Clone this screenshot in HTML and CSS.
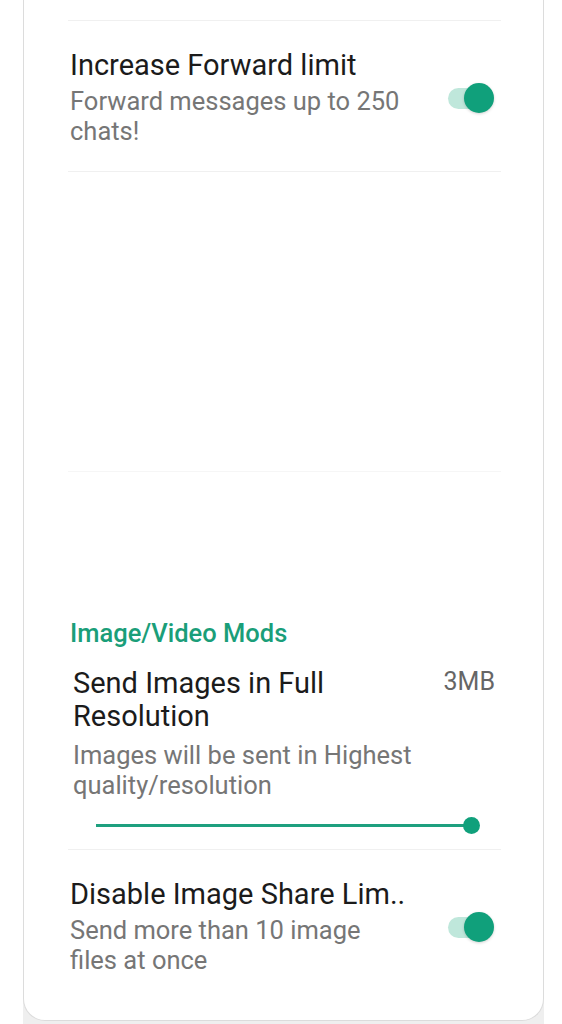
FILE: index.html
```html
<!DOCTYPE html>
<html lang="en">
<head>
    <meta charset="UTF-8">
    <meta name="viewport" content="width=device-width, initial-scale=1.0">
    <title>Mods Settings</title>
    <link rel="stylesheet" href="styles.css">
</head>
<body>

<div class="frame">
    <div class="card">
        <div class="list">
            <div class="pref-cut"></div>

            <div class="pref">
                <div class="pref-text">
                    <div class="pref-title">Increase Forward limit</div>
                    <div class="pref-sub">Forward messages up to 250 chats!</div>
                </div>
                <span class="switch"></span>
            </div>

            <div class="blurred"></div>

            <div class="section-title">Image/Video Mods</div>

            <div class="pref pref-slider">
                <div class="pref-head">
                    <div class="pref-title">Send Images in Full Resolution</div>
                    <div class="pref-value">3MB</div>
                </div>
                <div class="pref-sub">Images will be sent in Highest quality/resolution</div>
                <div class="slider">
                    <div class="slider-line"></div>
                    <div class="slider-knob"></div>
                </div>
            </div>

            <div class="pref pref-last">
                <div class="pref-text">
                    <div class="pref-title nowrap">Disable Image Share Lim..</div>
                    <div class="pref-sub">Send more than 10 image files at once</div>
                </div>
                <span class="switch"></span>
            </div>
        </div>
    </div>
</div>

</body>
</html>
```

FILE: styles.css
```css
body {
    margin: 0;
    padding: 0;
    background-color: #fff;
    font-family: Roboto, "Noto Sans", sans-serif;
    color: #1b1b1b;
}

.frame {
    width: 521px;
    height: 1024px;
    margin-left: 23px;
    background-color: #efefef;
    overflow: hidden;
}

.card {
    background-color: #fff;
    border: 1px solid #dcdcdc;
    border-top: none;
    border-radius: 0 0 22px 22px;
    padding-bottom: 20px;
}

.list {
    margin: 0 42px 0 44px;
}

.pref-cut {
    height: 20px;
    border-bottom: 1px solid #f0f0f0;
}

.pref {
    display: flex;
    align-items: center;
    gap: 41px;
    padding: 28px 7px 25px 2px;
    border-bottom: 1px solid #f0f0f0;
}

.pref-last {
    border-bottom: none;
}

.pref-text {
    flex: 1;
    min-width: 0;
}

.pref-title {
    font-size: 29px;
    line-height: 33px;
    color: #1b1b1b;
}

.nowrap {
    white-space: nowrap;
}

.pref-sub {
    margin-top: 4px;
    font-size: 25.5px;
    line-height: 30px;
    color: #767676;
}

/* toggle */
.switch {
    position: relative;
    flex: none;
    width: 46px;
    height: 30px;
}

.switch::before {
    content: "";
    position: absolute;
    left: 0;
    top: 5px;
    width: 40px;
    height: 21px;
    border-radius: 11px;
    background-color: #bfe7db;
}

.switch::after {
    content: "";
    position: absolute;
    right: 0;
    top: 0;
    width: 30px;
    height: 30px;
    border-radius: 50%;
    background-color: #10a07b;
    box-shadow: 0 1px 3px rgba(0, 0, 0, 0.18);
}

.blurred {
    height: 299px;
    border-bottom: 1px solid #f6f6f6;
}

.section-title {
    margin-top: 147px;
    padding-left: 2px;
    font-size: 25.5px;
    line-height: 28px;
    font-weight: 500;
    color: #1a9e79;
}

/* slider preference */
.pref-slider {
    display: block;
    padding: 20px 6px 15px 5px;
}

.pref-head {
    display: flex;
    align-items: flex-start;
    gap: 20px;
}

.pref-head .pref-title {
    flex: 1;
    padding-right: 40px;
}

.pref-value {
    font-size: 25px;
    line-height: 30px;
    color: #666;
}

.pref-slider .pref-sub {
    margin-top: 7px;
}

.slider {
    display: flex;
    align-items: center;
    width: 384px;
    height: 18px;
    margin: 16px 0 0 23px;
}

.slider-line {
    flex: 1;
    height: 3px;
    background-color: #1ea07f;
}

.slider-knob {
    width: 17px;
    height: 17px;
    margin-left: -8px;
    border-radius: 50%;
    background-color: #10a07b;
}
```
